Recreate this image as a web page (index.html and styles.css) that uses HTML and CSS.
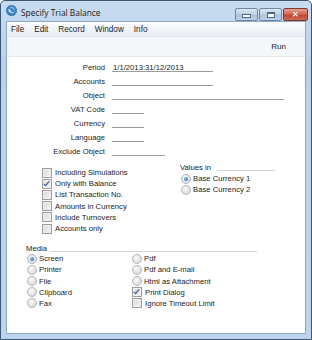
FILE: index.html
```html
<!DOCTYPE html>
<html lang="en">
<head>
    <meta charset="UTF-8">
    <title>Specify Trial Balance</title>
    <link rel="stylesheet" href="styles.css">
</head>
<body>
<div class="window">
    <div class="titlebar">
        <svg class="app-icon" width="11" height="11" viewBox="0 0 11 11">
            <circle cx="5.5" cy="5.5" r="5.2" fill="#3f86c8"/>
            <circle cx="5.5" cy="5.5" r="5.2" fill="none" stroke="#2a62a0" stroke-width="0.6"/>
            <path d="M2.4 4.2 C2.6 7.6 6.6 9.2 8.8 6.4 C7.2 7.6 4.4 7.2 3.8 4.4 Z" fill="#fff"/>
            <path d="M4.6 2.6 C6.4 2.2 8 3.2 8.4 4.6" fill="none" stroke="#cfe4f7" stroke-width="0.8"/>
        </svg>
        <span class="title">Specify Trial Balance</span>
        <div class="caption-buttons">
            <div class="cap-btn"><span class="glyph-min"></span></div>
            <div class="cap-btn"><span class="glyph-max"></span></div>
            <div class="cap-btn close"><span class="glyph-close">&#x2715;</span></div>
        </div>
    </div>
    <div class="client">
        <div class="menubar">
            <span>File</span>
            <span>Edit</span>
            <span>Record</span>
            <span>Window</span>
            <span>Info</span>
        </div>
        <div class="toolbar">
            <span>Run</span>
        </div>
        <div class="content">
            <div class="fields">
                <label>Period</label>
                <div class="field wide">1/1/2013:31/12/2013</div>
                <label>Accounts</label>
                <div class="field wide"></div>
                <label>Object</label>
                <div class="field xwide"></div>
                <label>VAT Code</label>
                <div class="field short"></div>
                <label>Currency</label>
                <div class="field short"></div>
                <label>Language</label>
                <div class="field short"></div>
                <label>Exclude Object</label>
                <div class="field medium"></div>
            </div>

            <div class="options">
                <div class="checks">
                    <div class="opt"><span class="box"></span>Including Simulations</div>
                    <div class="opt"><span class="box checked"></span>Only with Balance</div>
                    <div class="opt"><span class="box"></span>List Transaction No.</div>
                    <div class="opt"><span class="box"></span>Amounts in Currency</div>
                    <div class="opt"><span class="box"></span>Include Turnovers</div>
                    <div class="opt"><span class="box"></span>Accounts only</div>
                </div>
                <div class="values">
                    <div class="group-head values-head"><span>Values in</span><div class="rule"></div></div>
                    <div class="opt"><span class="radio on"></span>Base Currency 1</div>
                    <div class="opt"><span class="radio"></span>Base Currency 2</div>
                </div>
            </div>

            <div class="group-head media-head"><span>Media</span><div class="rule"></div></div>
            <div class="media">
                <div class="opt"><span class="radio on"></span>Screen</div>
                <div class="opt"><span class="radio"></span>Pdf</div>
                <div class="opt"><span class="radio"></span>Printer</div>
                <div class="opt"><span class="radio"></span>Pdf and E-mail</div>
                <div class="opt"><span class="radio"></span>File</div>
                <div class="opt"><span class="radio"></span>Html as Attachment</div>
                <div class="opt"><span class="radio"></span>Clipboard</div>
                <div class="opt"><span class="box checked"></span>Print Dialog</div>
                <div class="opt"><span class="radio"></span>Fax</div>
                <div class="opt"><span class="box"></span>Ignore Timeout Limit</div>
            </div>
        </div>
    </div>
</div>
</body>
</html>
```

FILE: styles.css
```css
body {
    margin: 0;
    font-family: "Liberation Sans", Arial, sans-serif;
    font-size: 7.7px;
    color: #1c1c1c;
}
.window {
    width: 312px;
    height: 340px;
    box-sizing: border-box;
    border: 1px solid #3b5873;
    border-radius: 5px 5px 0 0;
    background: linear-gradient(#c8dcf1, #b9d2ec 60px, #bcd4ee);
    padding: 0 5px 5px 5px;
    display: flex;
    flex-direction: column;
}
.titlebar {
    height: 20px;
    display: flex;
    align-items: center;
}
.app-icon {
    margin-top: -1px;
}
.title {
    margin-left: 4px;
    font-family: "Open Sans", "Liberation Sans", sans-serif;
    font-size: 8.4px;
    color: #1a1a1a;
    margin-top: 2px;
}
.caption-buttons {
    margin-left: auto;
    display: flex;
    align-self: flex-start;
    margin-top: 7px;
    margin-right: -2px;
}
.cap-btn {
    width: 21px;
    height: 11px;
    border: 1px solid #6d88a6;
    border-radius: 2px;
    background: linear-gradient(#dbe6f2, #bccde2 50%, #a9bfd9 51%, #bfd2e8);
    margin-left: 1px;
    display: flex;
    align-items: center;
    justify-content: center;
}
.cap-btn.close {
    width: 23px;
    border-color: #7a3a33;
    background: linear-gradient(#e8a090, #d0604c 50%, #c0402c 51%, #d26a55);
}
.glyph-min {
    width: 7px;
    height: 2px;
    background: #fff;
    border: 1px solid #4d6784;
    margin-top: 3px;
}
.glyph-max {
    width: 6px;
    height: 3px;
    border: 1px solid #4d6784;
    border-top-width: 2px;
    background: #fff;
}
.glyph-close {
    color: #fff;
    font-size: 8px;
    font-weight: bold;
    line-height: 8px;
    text-shadow: 0 0 1px #6a2018;
}
.client {
    flex: 1;
    border: 1px solid #8ea8c3;
    background: #fff;
    display: flex;
    flex-direction: column;
}
.menubar {
    height: 14px;
    display: flex;
    align-items: center;
    gap: 10px;
    padding-left: 4px;
    background: linear-gradient(#fbfcfe, #e8eef6);
    border-bottom: 1px solid #dfe5ec;
    font-size: 8.2px;
}
.toolbar {
    height: 19px;
    display: flex;
    align-items: center;
    justify-content: flex-end;
    padding-right: 19px;
    background: #f5f7fa;
    border-bottom: 1px solid #e6eaf0;
    font-size: 8px;
}
.content {
    flex: 1;
    padding-top: 4px;
}
.fields {
    display: grid;
    grid-template-columns: 98px 1fr;
    column-gap: 7px;
    grid-auto-rows: 14px;
}
.fields label {
    text-align: right;
    line-height: 14px;
}
.field {
    height: 10px;
    border-bottom: 1px solid #9b9b9b;
    line-height: 13px;
    padding-left: 1px;
}
.field.wide { width: 100px; }
.field.xwide { width: 171px; }
.field.short { width: 31px; }
.field.medium { width: 52px; }
.options {
    display: flex;
    margin-top: 2px;
}
.checks {
    width: 138px;
    margin-left: 35px;
    padding-top: 6px;
}
.opt {
    height: 11.2px;
    display: flex;
    align-items: center;
    white-space: nowrap;
}
.box {
    width: 8px;
    height: 8px;
    border: 1px solid #9c9c9c;
    background: linear-gradient(135deg, #d9d9d9, #f4f4f4);
    box-shadow: inset 0 0 0 1px #f0f0f0;
    margin-right: 3px;
    flex: none;
    position: relative;
}
.box.checked::after {
    content: "";
    position: absolute;
    left: 2px;
    top: 0;
    width: 2px;
    height: 5px;
    border: solid #2a4d8f;
    border-width: 0 1.4px 1.4px 0;
    transform: rotate(40deg);
}
.radio {
    width: 8px;
    height: 8px;
    border: 1px solid #b4b4b4;
    border-radius: 50%;
    background: radial-gradient(circle at 40% 35%, #fafafa, #d2d2d2);
    margin-right: 2px;
    flex: none;
    position: relative;
}
.radio.on::after {
    content: "";
    position: absolute;
    left: 2px;
    top: 2px;
    width: 4px;
    height: 4px;
    border-radius: 50%;
    background: radial-gradient(circle at 35% 35%, #7cc4f2, #1f5ea8);
}
.values .opt {
    padding-left: 1px;
}
.group-head {
    display: flex;
    align-items: center;
    height: 12px;
}
.rule {
    height: 1px;
    background: #d4d4d4;
    margin-top: 6px;
}
.values-head .rule {
    width: 58px;
    margin-left: 6px;
}
.media-head {
    margin-top: 8px;
    margin-left: 19px;
}
.media-head .rule {
    width: 207px;
    margin-left: 3px;
}
.media {
    display: grid;
    grid-template-columns: 105px 1fr;
    margin-left: 20px;
    margin-top: -1px;
}
```
